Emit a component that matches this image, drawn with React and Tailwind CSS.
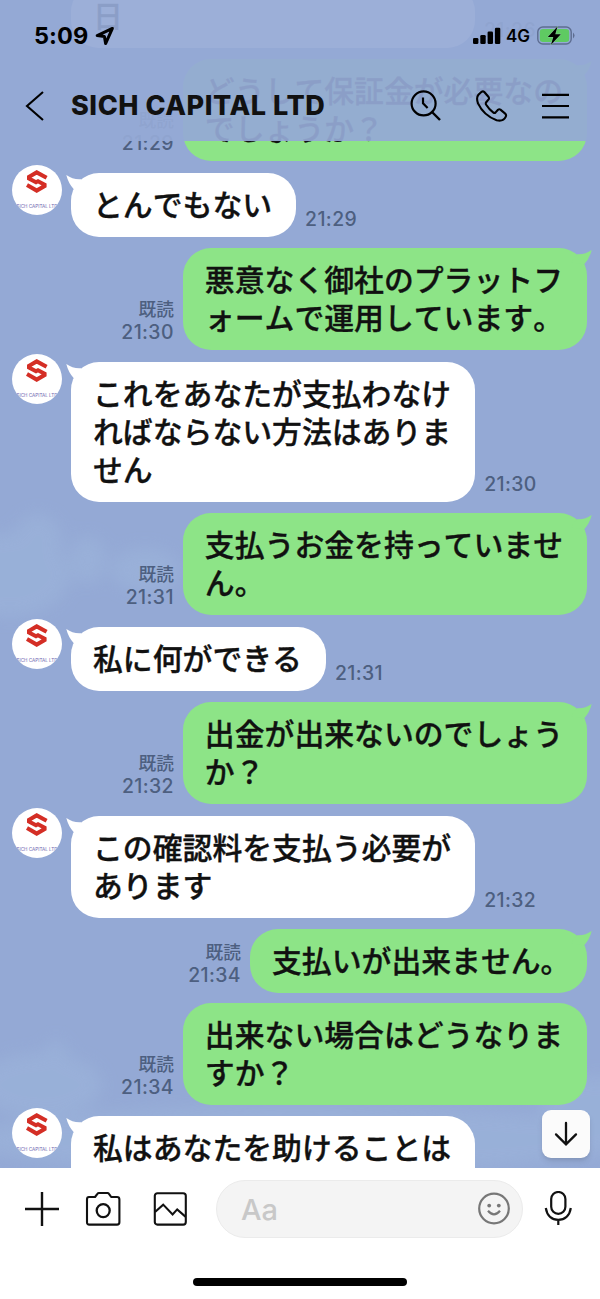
import clsx from "clsx";

const messages = [
  { from: "them", lines: ["日"], time: "21:26", continued: true },
  {
    from: "me",
    lines: ["どうして保証金が必要なの", "でしょうか？"],
    time: "21:29",
    tail: true,
  },
  { from: "them", lines: ["とんでもない"], time: "21:29", tail: true },
  {
    from: "me",
    lines: ["悪意なく御社のプラットフ", "ォームで運用しています。"],
    time: "21:30",
    tail: true,
  },
  {
    from: "them",
    lines: ["これをあなたが支払わなけ", "ればならない方法はありま", "せん"],
    time: "21:30",
    tail: true,
  },
  {
    from: "me",
    lines: ["支払うお金を持っていませ", "ん。"],
    time: "21:31",
    tail: true,
  },
  { from: "them", lines: ["私に何ができる"], time: "21:31", tail: true },
  {
    from: "me",
    lines: ["出金が出来ないのでしょう", "か？"],
    time: "21:32",
    tail: true,
  },
  {
    from: "them",
    lines: ["この確認料を支払う必要が", "あります"],
    time: "21:32",
    tail: true,
  },
  {
    from: "me",
    lines: ["支払いが出来ません。"],
    time: "21:34",
    tail: true,
    hangingStop: true,
  },
  {
    from: "me",
    lines: ["出来ない場合はどうなりま", "すか？"],
    time: "21:34",
    grouped: true,
  },
  {
    from: "them",
    lines: ["私はあなたを助けることは", "\u00a0"],
    tail: true,
  },
];

function Avatar({ hidden }) {
  return (
    <div
      className={clsx(
        "-mt-2 h-[50px] w-[50px] shrink-0 overflow-hidden rounded-full bg-white",
        hidden && "invisible"
      )}
    >
      <svg viewBox="0 0 50 50" className="h-full w-full">
        <path
          d="M34.6 12.8 L24.7 7.4 L17 11.8 V13.6 L24 17.2 L26 16.2 L32.6 19.6 V21 L24.7 25.6 L15 20"
          fill="none"
          stroke="#d42e25"
          strokeWidth="4"
        />
        <text
          x="25"
          y="43"
          textAnchor="middle"
          fontSize="4.6"
          fontFamily="Inter, sans-serif"
          fill="#6c66b0"
          textLength="41"
        >
          SICH CAPITAL LTD
        </text>
      </svg>
    </div>
  );
}

function Tail({ mine }) {
  return (
    <svg
      viewBox="0 0 22 18"
      className={clsx(
        "absolute top-0 h-[18px] w-[22px]",
        mine ? "-right-[5px] -scale-x-100 text-[#8de487]" : "-left-[5px] text-white"
      )}
    >
      <path
        d="M0.3 2 Q7 6.8 15 6.2 L21 14 L8 16.5 Q2.4 10.5 0.3 2Z"
        fill="currentColor"
      />
    </svg>
  );
}

function Message({ msg }) {
  const mine = msg.from === "me";

  return (
    <div
      className={clsx(
        "flex shrink-0",
        mine ? "justify-end pr-[13px]" : "pl-3",
        msg.grouped && "-mt-[1.5px]"
      )}
    >
      {!mine && <Avatar hidden={msg.continued} />}
      {mine && (
        <div className="mr-[9px] self-end pb-1.5 text-right font-medium text-[#4d5f80]">
          <p className="-mt-px mb-px text-[17.7px] leading-[23px]">既読</p>
          <p className="font-['Inter'] text-[19.4px] leading-[23px] tracking-[0.4px]">
            {msg.time}
          </p>
        </div>
      )}
      <div
        className={clsx(
          "relative rounded-[28px] pt-[11px] pb-[15px] pl-[22px]",
          mine ? "bg-[#8de487]" : "ml-[9px] bg-white",
          msg.continued && "w-[404px]",
          msg.hangingStop ? "w-[337px]" : "pr-6"
        )}
      >
        {msg.tail && <Tail mine={mine} />}
        {msg.lines.map((line, i) => (
          <p
            key={i}
            className="relative text-[29.85px] leading-[38px] font-medium whitespace-nowrap text-[#111] [-webkit-text-stroke:0.35px_#111] [font-kerning:none]"
          >
            {line}
          </p>
        ))}
      </div>
      {!mine && msg.time && (
        <p className="ml-[9px] self-end pb-1.5 font-['Inter'] text-[19.4px] leading-[23px] font-medium tracking-[0.4px] text-[#4d5f80]">
          {msg.time}
        </p>
      )}
    </div>
  );
}

function StatusBar() {
  return (
    <div className="flex h-[72px] items-center pr-[25px] pl-[34px] font-['Inter'] text-black">
      <span className="text-[23.5px] font-bold tracking-[0.1px]">5:09</span>
      <svg viewBox="0 0 20 20" className="ml-[7px] h-5 w-5">
        <path
          d="M17.4 2.4 L2.2 9.6 L9.4 10.6 L10.6 17.6 Z"
          fill="none"
          stroke="#000"
          strokeWidth="3"
          strokeLinejoin="round"
        />
      </svg>
      <svg viewBox="0 0 28 18" className="ml-auto h-[18px] w-7">
        <rect x="0" y="11" width="5.4" height="6" rx="1.3" />
        <rect x="7.3" y="8" width="5.4" height="9" rx="1.3" />
        <rect x="14.6" y="4.5" width="5.4" height="12.5" rx="1.3" />
        <rect x="21.9" y="0.8" width="5.4" height="16.2" rx="1.3" />
      </svg>
      <span className="mt-0.5 ml-[5px] text-[17px] font-semibold">4G</span>
      <svg viewBox="0 0 38 20" className="ml-[7px] h-5 w-[38px]">
        <rect
          x="0.8"
          y="1"
          width="33.4"
          height="17"
          rx="5"
          fill="none"
          stroke="#5d6d90"
          strokeWidth="1.4"
        />
        <rect x="2.8" y="3" width="29.4" height="13" rx="3.2" fill="#5fca62" />
        <path d="M36 6.5 Q39 9.5 36 12.5Z" fill="#5d6d90" />
        <path
          d="M20.5 0.5 L10.8 11 H16.3 L14 18.8 L23.8 8.2 H18.3 Z"
          fill="#000"
          stroke="#8bc7a0"
          strokeWidth="1"
          paintOrder="stroke"
        />
      </svg>
    </div>
  );
}

function ChatHeader() {
  return (
    <div className="flex h-[68px] items-center pr-[31px] pl-[25px]">
      <svg
        viewBox="0 0 20 32"
        className="h-8 w-5"
        fill="none"
        stroke="#000"
        strokeWidth="2.1"
      >
        <path d="M18 2 L2 16 L18 30" />
      </svg>
      <h1 className="ml-[26px] font-['Inter'] text-[27px] font-extrabold tracking-[0.55px] whitespace-nowrap text-[#111]">
        SICH CAPITAL LTD
      </h1>
      <svg
        viewBox="0 0 32 32"
        className="ml-auto h-8 w-8"
        fill="none"
        stroke="#000"
        strokeWidth="2.2"
      >
        <circle cx="13.6" cy="13.4" r="12" />
        <path d="M22 22 L30 30" strokeWidth="2.4" />
        <path d="M13 7.4 V13.4 L17.6 18" />
      </svg>
      <svg
        viewBox="0 0 32 32"
        className="ml-[34px] h-8 w-8"
        fill="none"
        stroke="#000"
        strokeWidth="2.1"
        strokeLinejoin="round"
      >
        <path d="M2.4 4.8 L5.6 1.8 Q7 0.7 8.3 2 L12.6 7 Q13.4 8.2 12.6 9.4 L10.2 12.2 Q9.4 13.4 10.2 14.8 Q13 19.4 17.4 22.6 Q18.6 23.4 19.6 22.4 L22 19.8 Q23.2 18.8 24.4 19.6 L29.2 23.6 Q30.6 24.8 29.8 26.6 Q27.4 31.8 20.6 30.2 Q7.8 25.6 2 13.4 Q0 7.6 2.4 4.8Z" />
      </svg>
      <svg
        viewBox="0 0 27 26"
        className="ml-[34px] h-[26px] w-[27px]"
        stroke="#000"
        strokeWidth="2.2"
      >
        <path d="M0 1.8 H27 M0 13 H27 M0 24.4 H27" />
      </svg>
    </div>
  );
}

// Soft clouds of the default chat wallpaper
function Wallpaper() {
  return (
    <svg viewBox="0 0 600 1168" className="absolute inset-0 h-full w-full">
      <defs>
        <filter id="soft" x="-30%" y="-30%" width="160%" height="160%">
          <feGaussianBlur stdDeviation="8" />
        </filter>
      </defs>
      <g fill="#9bb3da" filter="url(#soft)" opacity="0.7">
        <ellipse cx="10" cy="575" rx="60" ry="42" />
        <ellipse cx="38" cy="540" rx="24" ry="26" />
        <ellipse cx="88" cy="560" rx="18" ry="24" />
        <ellipse cx="145" cy="570" rx="34" ry="22" />
        <ellipse cx="40" cy="1085" rx="62" ry="32" />
        <ellipse cx="56" cy="1060" rx="12" ry="20" />
        <ellipse cx="300" cy="1140" rx="330" ry="34" />
        <ellipse cx="600" cy="1110" rx="60" ry="34" />
      </g>
    </svg>
  );
}

function Composer() {
  return (
    <footer className="relative flex h-[131px] flex-col justify-between bg-white pt-3 pb-[13px]">
      <div className="flex h-[58px] items-center pl-[25px]">
        <svg viewBox="0 0 34 34" className="h-[34px] w-[34px]" stroke="#111" strokeWidth="2.4">
          <path d="M0 17 H34 M17 0 V34" />
        </svg>
        <svg
          viewBox="0 0 36 36"
          className="ml-[26px] h-9 w-9"
          fill="none"
          stroke="#111"
          strokeWidth="2.1"
          strokeLinejoin="round"
        >
          <path d="M4 6 H10 L12.6 2.6 Q13 2 14 2 H22.4 Q23.4 2 23.8 2.6 L26.2 6 H32 Q34.4 6 34.4 8.4 V31.2 Q34.4 33.6 32 33.6 H4.4 Q2 33.6 2 31.2 V8.4 Q2 6 4 6Z" />
          <circle cx="18.2" cy="19.6" r="6.5" strokeWidth="2.3" />
        </svg>
        <svg
          viewBox="0 0 36 36"
          className="ml-[31px] h-9 w-9"
          fill="none"
          stroke="#111"
          strokeWidth="2.1"
        >
          <rect x="2.8" y="2.2" width="31" height="31.4" rx="2.6" />
          <path d="M3 21 L11.2 13.6 L20.6 23.4 L25.2 18.4 L33.4 25.6" />
        </svg>
        <div className="ml-7 flex h-[58px] w-[307px] items-center rounded-full border border-[#ebebeb] bg-[#f4f4f4] pr-[11px] pl-6">
          <span className="mt-0.5 font-['Inter'] text-[29px] font-medium text-[#c8c8c8]">Aa</span>
          <svg
            viewBox="0 0 34 34"
            className="ml-auto h-[34px] w-[34px]"
            fill="none"
            stroke="#777"
            strokeWidth="2.2"
          >
            <circle cx="17" cy="16.5" r="14.8" />
            <circle cx="12.2" cy="13.6" r="1.9" fill="#777" stroke="none" />
            <circle cx="21.8" cy="13.6" r="1.9" fill="#777" stroke="none" />
            <path d="M11 18.8 Q17 26 23 18.8" />
          </svg>
        </div>
        <svg
          viewBox="0 0 28 36"
          className="ml-[21px] h-9 w-7"
          fill="none"
          stroke="#111"
          strokeWidth="2.2"
        >
          <rect x="7.2" y="1" width="14.2" height="21.8" rx="7.1" />
          <path d="M1.8 17 C3 24.8 8 28.8 14.3 28.8 C20.6 28.8 25.6 24.8 26.8 17 M14.3 28.8 V34" />
        </svg>
      </div>
      <div className="mx-auto h-2 w-[214px] rounded-full bg-black" />
    </footer>
  );
}

export default function App() {
  return (
    <div className="flex h-[1299px] w-[600px] flex-col overflow-hidden bg-[#94a9d5] font-['Noto_Sans_CJK_JP',sans-serif]">
      <header className="relative z-10 h-[141px] shrink-0 bg-[#94a9d5]/93">
        <StatusBar />
        <ChatHeader />
      </header>

      <main className="relative -mt-[141px] h-[1168px] shrink-0 overflow-hidden">
        <Wallpaper />
        <div className="relative -mt-4 flex flex-col gap-[11.45px]">
          {messages.map((msg, i) => (
            <Message key={i} msg={msg} />
          ))}
        </div>
        <button
          type="button"
          className="absolute right-2.5 bottom-2.5 flex h-12 w-12 items-center justify-center rounded-[9px] bg-[#fbfbfb] shadow-md"
        >
          <svg
            viewBox="0 0 24 26"
            className="h-[26px] w-6"
            fill="none"
            stroke="#111"
            strokeWidth="2.3"
            strokeLinecap="round"
          >
            <path d="M12 2 V23 M2 13.4 L12 23.4 L22 13.4" />
          </svg>
        </button>
      </main>

      <Composer />
    </div>
  );
}
